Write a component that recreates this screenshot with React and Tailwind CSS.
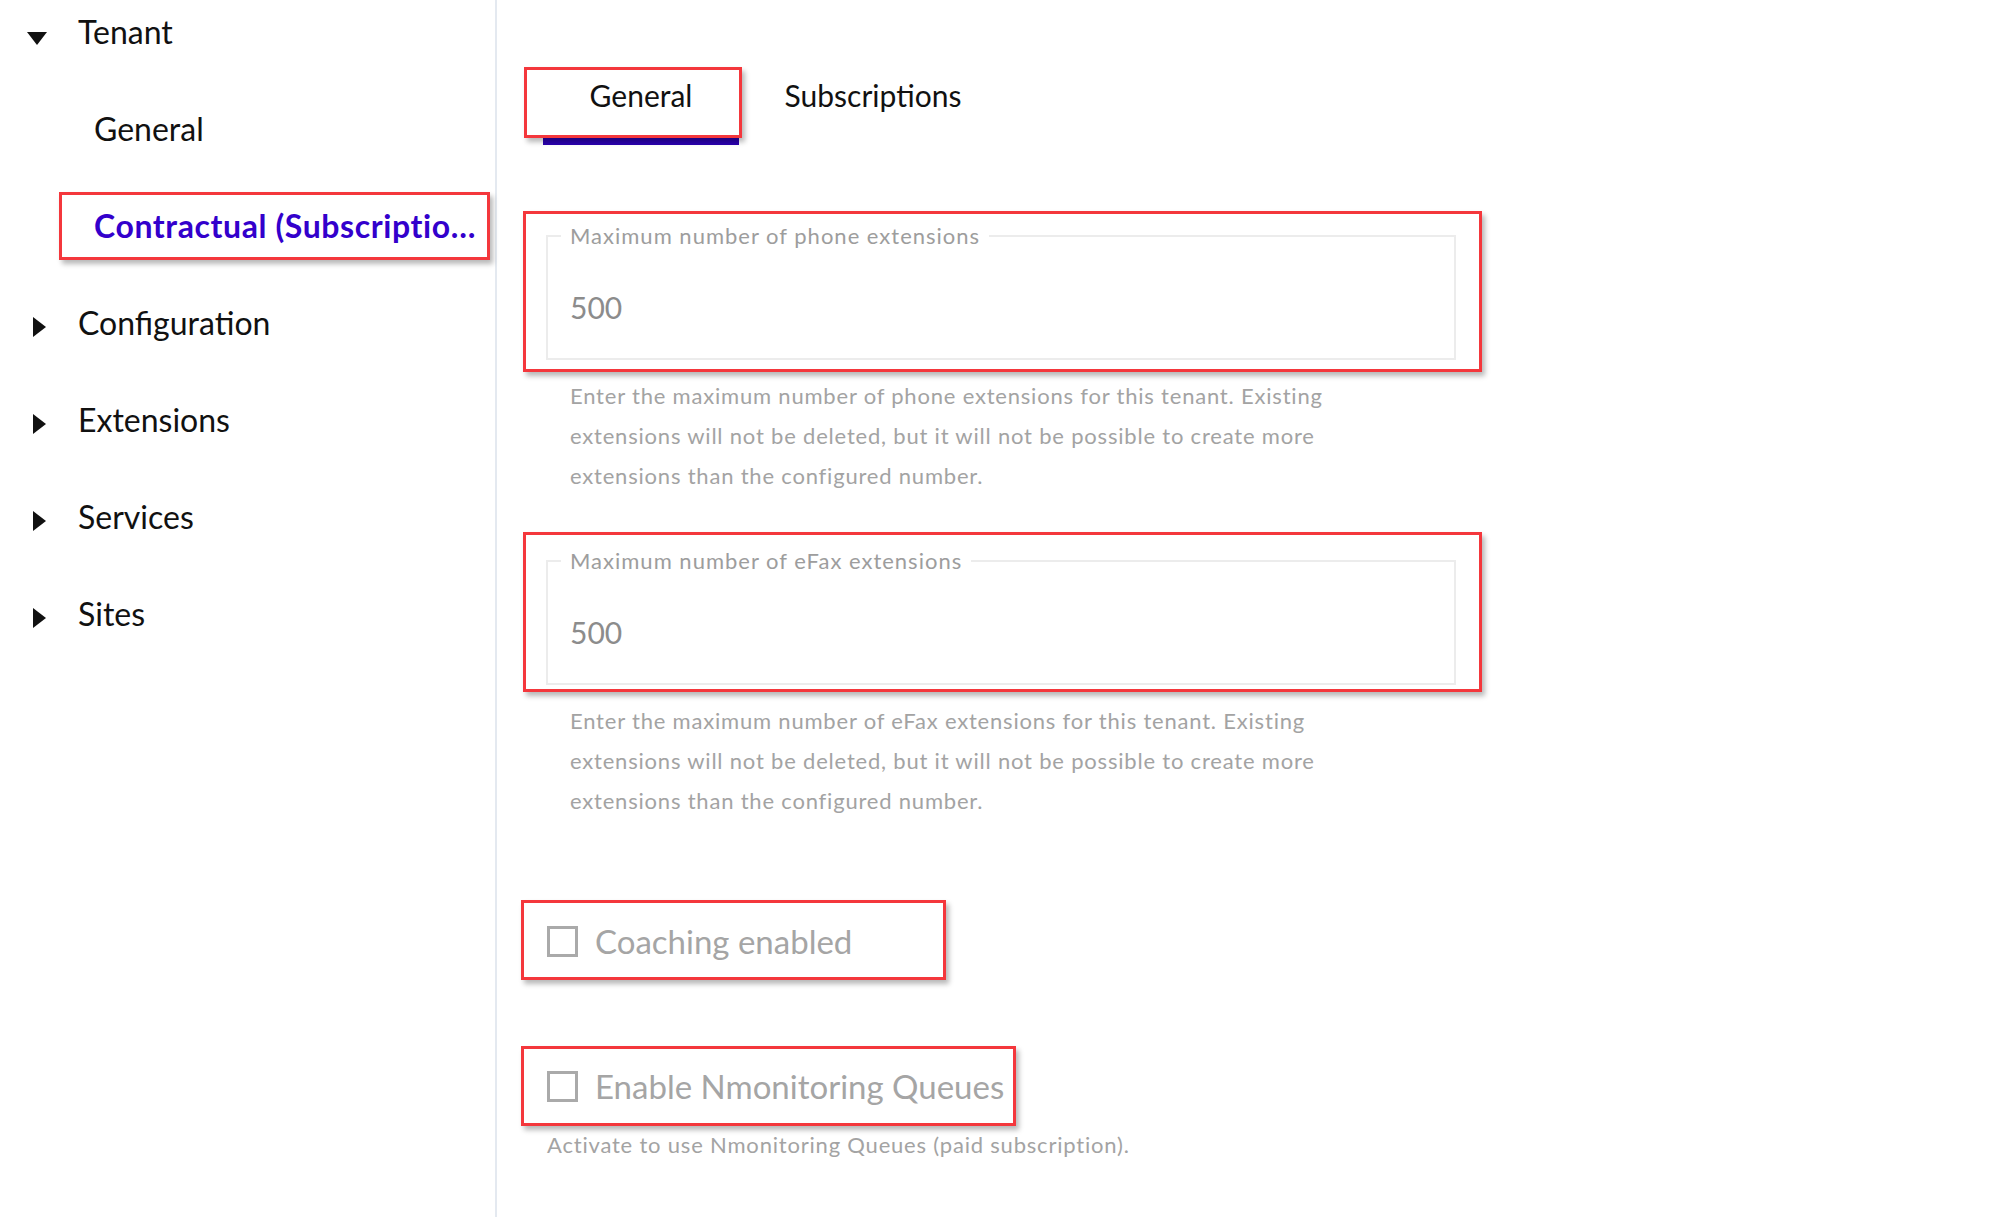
import React, { useState } from 'react'

const navItems = [
  { label: 'Configuration' },
  { label: 'Extensions' },
  { label: 'Services' },
  { label: 'Sites' },
]

function TriangleDown() {
  return (
    <svg width="20" height="13" viewBox="0 0 20 13" className="mt-[20px] block">
      <polygon points="0,0 20,0 10,13" fill="#111" />
    </svg>
  )
}

function TriangleRight() {
  return (
    <svg width="13" height="20" viewBox="0 0 13 20" className="ml-[6px] mt-[14px] block">
      <polygon points="0,0 13,10 0,20" fill="#111" />
    </svg>
  )
}

function Highlight({ className }) {
  // red annotation frame drawn over the highlighted element
  return (
    <div
      className={`pointer-events-none absolute border-[3px] border-[#f4373c] shadow-[3px_4px_5px_rgba(0,0,0,0.28)] ${className}`}
    />
  )
}

function NumberField({ label, value, help, frameClass }) {
  return (
    <div>
      <div className="relative w-[910px]">
        <Highlight className={frameClass} />
        <fieldset className="w-[910px] border-2 border-[#ececec] px-[22px] pb-[33px]">
          <legend className="ml-[-9px] px-[9px] text-[22px] leading-[28px] tracking-[1px] text-[#9d9d9d]">
            {label}
          </legend>
          <div className="mt-[39px] text-[30px] leading-[36px] text-[#8c8c8c]">{value}</div>
        </fieldset>
      </div>
      <p className="ml-[24px] mt-[16px] w-[790px] text-[22px] leading-[40px] tracking-[0.8px] text-[#a3a3a3]">
        {help}
      </p>
    </div>
  )
}

function CheckRow({ label, checked, onChange, frameClass }) {
  return (
    <label className="relative flex h-[40px] cursor-pointer items-center gap-[17px]">
      <Highlight className={frameClass} />
      <span className="h-[31px] w-[31px] border-[3px] border-[#aaaaaa] bg-white">
        {checked && <span className="block h-full w-full bg-[#aaaaaa]" />}
      </span>
      <input type="checkbox" className="hidden" checked={checked} onChange={onChange} />
      <span className="text-[33px] leading-[40px] text-[#a5a5a5]">{label}</span>
    </label>
  )
}

export default function App() {
  const [tab, setTab] = useState('general')
  const [coaching, setCoaching] = useState(false)
  const [queues, setQueues] = useState(false)

  return (
    <div className="flex h-[1217px] w-full overflow-hidden bg-white font-['Lato','Liberation_Sans',sans-serif]">
      {/* Sidebar */}
      <aside className="w-[497px] shrink-0 border-r-2 border-[#e4e9f0]">
        <ul className="flex flex-col gap-[57px] pt-[12px] text-[32px] leading-[40px] text-[#111]">
          <li className="flex h-[40px] items-start pl-[27px]">
            <span className="flex w-[51px]"><TriangleDown /></span>
            <span>Tenant</span>
          </li>
          <li className="h-[40px] pl-[94px]">General</li>
          <li className="relative h-[40px] pl-[94px]">
            <Highlight className="left-[59px] top-[-14px] h-[68px] w-[431px]" />
            <span className="block w-[386px] truncate font-bold tracking-[0.6px] text-[#3300cc]">
              Contractual (Subscriptions)
            </span>
          </li>
          {navItems.map(item => (
            <li key={item.label} className="flex h-[40px] items-start pl-[27px]">
              <span className="flex w-[51px]"><TriangleRight /></span>
              <span>{item.label}</span>
            </li>
          ))}
        </ul>
      </aside>

      {/* Main */}
      <main className="flex-1 pl-[46px] pt-[70px]">
        <div className="flex gap-[36px]">
          <button
            onClick={() => setTab('general')}
            className={`relative w-[196px] pt-[7px] pb-[25px] text-[30px] leading-[36px] text-[#111] border-b-[7px] ${tab === 'general' ? 'border-[#2a00b0]' : 'border-transparent'}`}
          >
            <Highlight className="left-[-19px] top-[-3px] h-[71px] w-[218px]" />
            General
          </button>
          <button
            onClick={() => setTab('subscriptions')}
            className={`w-[196px] pt-[7px] pb-[25px] text-[30px] leading-[36px] text-[#111] border-b-[7px] ${tab === 'subscriptions' ? 'border-[#2a00b0]' : 'border-transparent'}`}
          >
            Subscriptions
          </button>
        </div>

        <div className="ml-[3px] mt-[77px] flex flex-col items-start">
          <NumberField
            label="Maximum number of phone extensions"
            value="500"
            help="Enter the maximum number of phone extensions for this tenant. Existing extensions will not be deleted, but it will not be possible to create more extensions than the configured number."
            frameClass="left-[-23px] right-[-26px] top-[-11px] bottom-[-12px]"
          />
          <div className="mt-[51px]">
            <NumberField
              label="Maximum number of eFax extensions"
              value="500"
              help="Enter the maximum number of eFax extensions for this tenant. Existing extensions will not be deleted, but it will not be possible to create more extensions than the configured number."
              frameClass="left-[-23px] right-[-26px] top-[-15px] bottom-[-7px]"
            />
          </div>

          <div className="ml-[1px] mt-[100px]">
            <CheckRow
              label="Coaching enabled"
              checked={coaching}
              onChange={() => setCoaching(!coaching)}
              frameClass="left-[-26px] top-[-21px] h-[80px] w-[425px]"
            />
          </div>
          <div className="ml-[1px] mt-[105px]">
            <CheckRow
              label="Enable Nmonitoring Queues"
              checked={queues}
              onChange={() => setQueues(!queues)}
              frameClass="left-[-26px] top-[-20px] h-[80px] w-[495px]"
            />
            <p className="mt-[25px] text-[22px] leading-[28px] tracking-[0.8px] text-[#a3a3a3]">
              Activate to use Nmonitoring Queues (paid subscription).
            </p>
          </div>
        </div>
      </main>
    </div>
  )
}
